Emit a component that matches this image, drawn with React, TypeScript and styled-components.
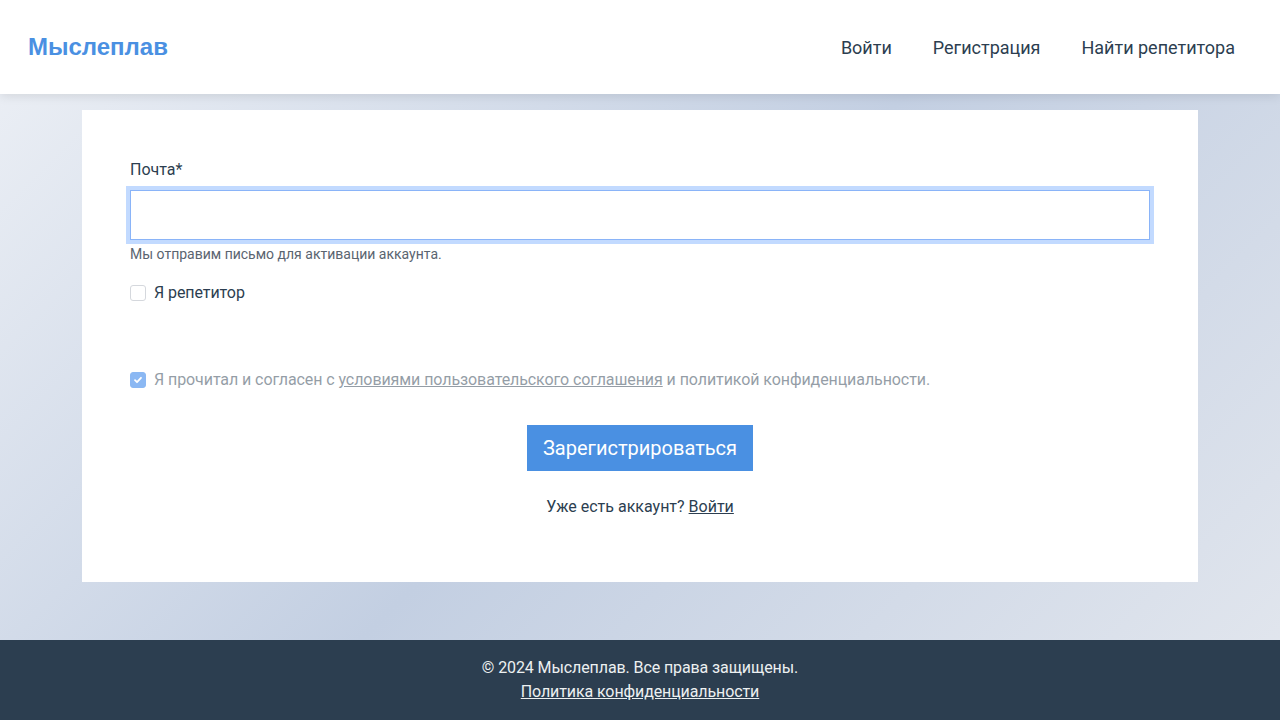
import React from 'react';
import styled, { createGlobalStyle } from 'styled-components';

const GlobalStyle = createGlobalStyle`
  * {
    box-sizing: border-box;
  }

  html,
  body {
    margin: 0;
    padding: 0;
  }

  body {
    font-family: Roboto, 'Noto Sans', sans-serif;
    color: #2c3e50;
    background: linear-gradient(135deg, #eef1f6 0%, #c3cfe2 50%, #e3e7ee 100%);
    min-height: 100vh;
  }
`;

// Каркас страницы
const Page = styled.div`
  display: flex;
  flex-direction: column;
  min-height: 100vh;
`;

const Header = styled.header`
  display: flex;
  align-items: center;
  justify-content: space-between;
  height: 94px;
  padding: 0 45px 0 28px;
  background-color: #fff;
  box-shadow: 0 2px 10px rgba(0, 0, 0, 0.1);
  position: relative;
  z-index: 1;
`;

const Logo = styled.a`
  font-family: 'Liberation Sans', Arial, sans-serif;
  font-size: 24px;
  font-weight: bold;
  color: #4a90e2;
  text-decoration: none;
`;

const Nav = styled.nav`
  display: flex;
  gap: 41px;
`;

const NavLink = styled.a`
  font-size: 18px;
  color: #2c3e50;
  text-decoration: none;
`;

const Main = styled.main`
  flex: 1;
  padding: 16px 82px 58px;
`;

const Card = styled.form`
  display: flex;
  flex-direction: column;
  padding: 48px 48px 63px;
  background-color: #fff;
`;

// Поля формы
const Label = styled.label`
  font-size: 16px;
  line-height: 24px;
  margin-bottom: 8px;
`;

const Input = styled.input`
  height: 50px;
  padding: 0 12px;
  border: 1px solid #8ab4f8;
  border-radius: 0;
  outline: none;
  box-shadow: 0 0 0 4px #c2daff;
  font-family: inherit;
  font-size: 16px;
`;

const Hint = styled.small`
  margin-top: 4px;
  font-size: 14px;
  line-height: 20px;
  color: #5a6470;
`;

const CheckRow = styled.label<{ $disabled?: boolean; $top: number }>`
  display: flex;
  align-items: center;
  gap: 8px;
  margin-top: ${(p) => p.$top}px;
  font-size: 16px;
  line-height: 24px;
  letter-spacing: -0.08px;
  opacity: ${(p) => (p.$disabled ? 0.5 : 1)};
`;

const Box = styled.span<{ $checked?: boolean }>`
  display: inline-flex;
  align-items: center;
  justify-content: center;
  width: 16px;
  height: 16px;
  border-radius: 3px;
  border: 1px solid ${(p) => (p.$checked ? '#1a73e8' : '#d5d8dd')};
  background-color: ${(p) => (p.$checked ? '#1a73e8' : '#fff')};
  flex-shrink: 0;
`;

const TextLink = styled.a`
  color: inherit;
  text-decoration: underline;
`;

const Submit = styled.button`
  align-self: center;
  height: 46px;
  margin-top: 33px;
  padding: 0 16px;
  border: none;
  background-color: #4a90e2;
  color: #fff;
  font-family: inherit;
  font-size: 20px;
  cursor: pointer;
`;

const LoginNote = styled.p`
  margin: 24px 0 0;
  text-align: center;
  font-size: 16px;
  line-height: 24px;
`;

const Footer = styled.footer`
  display: flex;
  flex-direction: column;
  align-items: center;
  height: 80px;
  padding-top: 16px;
  background-color: #2c3e50;
  color: #ecf0f1;
  font-size: 16px;
  line-height: 24px;
  letter-spacing: -0.1px;
`;

const FooterLink = styled.a`
  color: #ecf0f1;
  text-decoration: underline;
`;

function Check() {
  return (
    <svg width="10" height="10" viewBox="0 0 10 10" fill="none">
      <path d="M2 5.2l2 2 4-4.4" stroke="#fff" strokeWidth="1.8" strokeLinecap="round" strokeLinejoin="round" />
    </svg>
  );
}

function App() {
  return (
    <Page>
      <GlobalStyle />
      <Header>
        <Logo href="#">Мыслеплав</Logo>
        <Nav>
          <NavLink href="#">Войти</NavLink>
          <NavLink href="#">Регистрация</NavLink>
          <NavLink href="#">Найти репетитора</NavLink>
        </Nav>
      </Header>
      <Main>
        <Card onSubmit={(e) => e.preventDefault()}>
          <Label htmlFor="email">Почта*</Label>
          <Input id="email" type="email" />
          <Hint>Мы отправим письмо для активации аккаунта.</Hint>
          <CheckRow $top={17}>
            <Box />
            Я репетитор
          </CheckRow>
          <CheckRow $top={63} $disabled>
            <Box $checked>
              <Check />
            </Box>
            <span>
              Я прочитал и согласен с <TextLink href="#">условиями пользовательского соглашения</TextLink> и
              политикой конфиденциальности.
            </span>
          </CheckRow>
          <Submit type="submit">Зарегистрироваться</Submit>
          <LoginNote>
            Уже есть аккаунт? <TextLink href="#">Войти</TextLink>
          </LoginNote>
        </Card>
      </Main>
      <Footer>
        <span>© 2024 Мыслеплав. Все права защищены.</span>
        <FooterLink href="#">Политика конфиденциальности</FooterLink>
      </Footer>
    </Page>
  );
}

export default App;
